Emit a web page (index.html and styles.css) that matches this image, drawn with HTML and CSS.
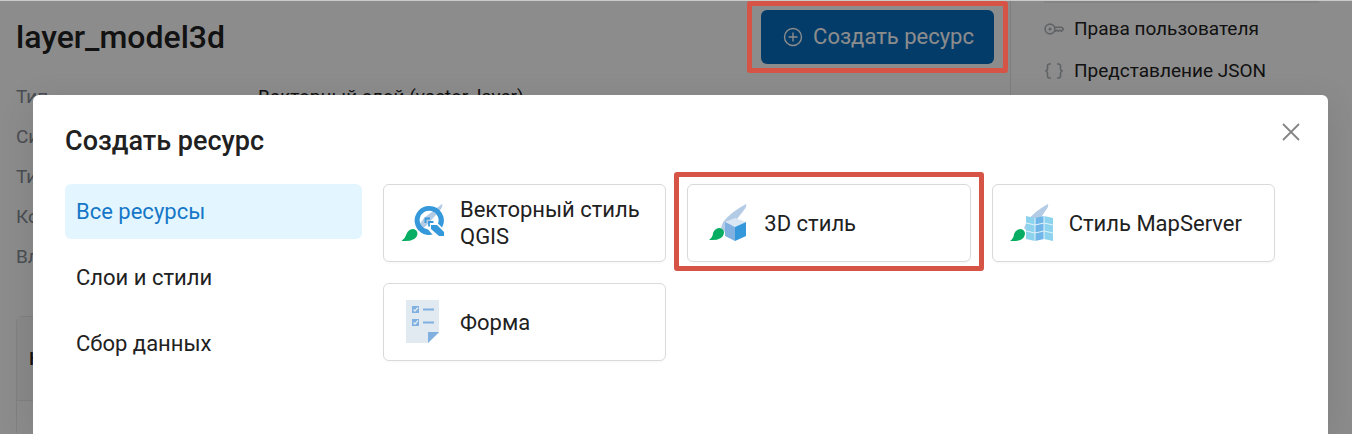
FILE: index.html
```html
<!DOCTYPE html>
<html lang="ru">
<head>
<meta charset="utf-8">
<title>layer_model3d</title>
<link rel="stylesheet" href="styles.css">
</head>
<body>
<div class="page">
  <main class="content">
    <header class="content-header">
      <h1 class="page-title">layer_model3d</h1>
      <div class="marked">
        <button class="create-button" type="button">
          <svg class="create-icon" viewBox="0 0 20 20" aria-hidden="true"><circle cx="10" cy="10" r="8.5"/><path d="M10 5.500v9M5.500 10h9"/></svg>
          Создать ресурс
        </button>
        <span class="marker marker-button"></span>
      </div>
    </header>
    <dl class="details">
      <dt>Тип</dt><dd>Векторный слой (vector_layer)</dd>
      <dt>Сис</dt><dd></dd>
      <dt>Тип</dt><dd></dd>
      <dt>Кол</dt><dd></dd>
      <dt>Вла</dt><dd></dd>
    </dl>
    <table class="fields">
      <thead><tr><th scope="col">На</th></tr></thead>
      <tbody><tr><td></td></tr></tbody>
    </table>
  </main>
  <aside class="side">
    <ul class="side-list">
      <li><a class="side-link" href="#">
        <svg class="side-icon" viewBox="0 0 20 20" aria-hidden="true"><circle cx="6" cy="10" r="4.9"/><circle cx="6" cy="10" r="0.8"/><path d="M10.600 8.200h7l1.800 1.800-1.800 2.200-1.800-1-1.500 1-1.500-1-1.200 1h-1.300"/></svg>
        Права пользователя</a></li>
      <li><a class="side-link" href="#">
        <svg class="side-icon" viewBox="0 0 20 20" aria-hidden="true"><path d="M7 3H5.500Q3.500 3 3.500 5v2.800Q3.500 10 1.200 10 3.500 10 3.500 12.200V15q0 2 2 2H7M13 3h1.500q2 0 2 2v2.800q0 2.200 2.300 2.200-2.300 0-2.300 2.200V15q0 2-2 2H13"/></svg>
        Представление JSON</a></li>
    </ul>
  </aside>
</div>
<div class="backdrop"></div>
<section class="modal" role="dialog" aria-labelledby="modal-title">
  <header class="modal-header">
    <h2 class="modal-title" id="modal-title">Создать ресурс</h2>
    <button class="close-button" type="button" aria-label="Закрыть">
      <svg class="close-icon" viewBox="0 0 18 18" aria-hidden="true"><path d="M1 1l16 16M17 1L1 17"/></svg>
    </button>
  </header>
  <div class="modal-body">
    <nav class="categories">
      <button class="category category-active" type="button">Все ресурсы</button>
      <button class="category" type="button">Слои и стили</button>
      <button class="category" type="button">Сбор данных</button>
    </nav>
    <div class="cards">
      <button class="card" type="button">
        <svg class="card-icon" viewBox="0 0 48 48" aria-hidden="true">
          <path fill="#b3cbe4" d="M44 5q1.500 2-2.500 7L28 27l-7 5-2-3 7-10z"/>
          <path fill="#06ad62" d="M3.500 42q4-3 5-7 2-5 7-5 4 1 4 5-1 8-16 7z"/>
          <path fill="#3498db" fill-rule="evenodd" d="M31 7a14.500 14.500 0 1 0 3.500 28.600l-4.500-5A9.500 9.500 0 1 1 40 24.500l4 4A14.500 14.500 0 0 0 31 7z"/>
          <path fill="#3498db" d="M33 26h6l7 7v4h-5l-8-7z"/>
          <path fill="none" stroke="#3498db" stroke-width="1.800" d="M27.500 24v-4.500H32M31 27.500V23h4.500"/>
        </svg>
        <span>Векторный стиль QGIS</span>
      </button>
      <div class="marked">
        <button class="card" type="button">
          <svg class="card-icon" viewBox="0 0 48 48" aria-hidden="true">
            <path fill="#b3cbe4" d="M44 5q1 2-2 6L28 29l-6 4-3-4 2-6Q29 13 44 5z"/>
            <path fill="#06ad62" d="M7 41q4-3 4-7 2-5 7-5 4 1 4 5-1 8-15 7z"/>
            <path fill="#d9e7f4" d="M23 23l10-4 11 4-11 5z"/>
            <path fill="#80b0e0" d="M23 23l10 5v14l-10-5z"/>
            <path fill="#3498db" d="M44 23l-11 5v14l11-5z"/>
          </svg>
          <span>3D стиль</span>
        </button>
        <span class="marker marker-card"></span>
      </div>
      <button class="card" type="button">
        <svg class="card-icon" viewBox="0 0 48 48" aria-hidden="true">
          <path fill="#b3cbe4" d="M41 5q1 2-2 6L29 26l-8 7-4-4 3-7Q28 12 41 5z"/>
          <path fill="#06ad62" d="M3 42q4-3 4-7 2-5 7-5 4 1 4 5-1 8-15 7z"/>
          <path fill="#8dd3ed" d="M19 17l9 2v23l-9-2zM37 17l9 2v23l-9-2z"/>
          <path fill="#70b6e9" d="M28 19l9-2v23l-9 2z"/>
          <path fill="none" stroke="#e1f3fb" stroke-width="1" d="M19 24l9 2 9-2 9 2M19 32l9 2 9-2 9 2M28 19v23M37 17v23"/>
        </svg>
        <span>Стиль MapServer</span>
      </button>
      <button class="card" type="button">
        <svg class="card-icon" viewBox="0 0 48 48" aria-hidden="true">
          <path fill="#e1eaf0" d="M8 2h33v33L30 45H8z"/>
          <path fill="#80b0e0" d="M30 34h11L30 45zM14 8h7v7h-7zM14 21h7v7h-7zM25 10.500h11v2H25zM25 23.500h11v2H25z"/>
          <path fill="none" stroke="#e1eaf0" stroke-width="1.300" d="M15.500 11.500l1.500 1.500 3-3.500M15.500 24.500l1.500 1.500 3-3.500"/>
        </svg>
        <span>Форма</span>
      </button>
    </div>
  </div>
</section>
</body>
</html>
```
FILE: styles.css
```css
* { box-sizing: border-box; }

body {
  margin: 0;
  min-height: 100vh;
  position: relative;
  background: #fff;
  color: #212121;
  font: 19px/28px Roboto, "Open Sans", sans-serif;
}

button {
  margin: 0;
  font: inherit;
  color: inherit;
  cursor: pointer;
}

svg { flex: none; fill: none; }

.page {
  display: grid;
  grid-template-columns: minmax(0, 1011fr) minmax(0, 341fr);
  min-height: 100vh;
}

.content {
  padding: 10px 16px 0;
  border-right: 1px solid #e6e6e6;
}

.content-header {
  display: flex;
  justify-content: space-between;
  align-items: center;
}

.page-title {
  margin: 0;
  font-size: 32px;
  font-weight: 500;
  line-height: 40px;
}

.marked {
  position: relative;
  display: grid;
}

.marker {
  position: absolute;
  z-index: 2;
  border: 5px solid #d65446;
  border-radius: 3px;
  pointer-events: none;
}

.marker-button { inset: -9px -14px; }
.marker-card { inset: -12px -13px -9px; }

.create-button {
  display: flex;
  align-items: center;
  gap: 10px;
  height: 54px;
  padding: 0 20px 0 22px;
  border: 0;
  border-radius: 6px;
  background: #066dbf;
  color: #fff;
  font-size: 22px;
}

.create-icon {
  width: 20px;
  height: 20px;
  stroke: currentColor;
  stroke-width: 1.4;
}

.details {
  display: grid;
  grid-template-columns: 242px 1fr;
  grid-auto-rows: 40px;
  align-items: center;
  margin: 13px 0 39px;
}

.details dt { color: #868e96; }
.details dd { margin: 0; }

.fields {
  width: 100%;
  border: 1px solid #ececec;
  border-bottom: 0;
  border-radius: 6px 6px 0 0;
  border-spacing: 0;
}

.fields th {
  height: 84px;
  padding: 0 12px;
  border-bottom: 1px solid #ececec;
  background: #fafafa;
  font-weight: 500;
  text-align: left;
}

.fields td { height: 32px; }

.side { padding: 0 33px; }

.side-list {
  margin: 0;
  padding: 5px 0 0;
  border-top: 3px solid #f0f0f0;
  list-style: none;
}

.side-link {
  display: flex;
  align-items: center;
  gap: 10px;
  height: 42px;
  color: #212121;
  text-decoration: none;
}

.side-icon {
  width: 20px;
  height: 20px;
  stroke: #b0b5ba;
  stroke-width: 1.6;
}

.backdrop {
  position: absolute;
  inset: 0;
  z-index: 1;
  border-top: 1px solid #c9cbc9;
  background: rgba(0, 0, 0, 0.45);
}

.modal {
  position: absolute;
  inset: 95px 24px 0 33px;
  z-index: 3;
  padding: 26px 27px 0 32px;
  border-radius: 6px 6px 0 0;
  background: #fff;
  box-shadow: 0 9px 36px rgba(0, 0, 0, 0.1);
}

.modal-header {
  display: flex;
  justify-content: space-between;
  align-items: flex-start;
}

.modal-title {
  margin: 0;
  font-size: 27px;
  font-weight: 500;
  line-height: 40px;
}

.close-button {
  display: flex;
  padding: 2px 1px;
  border: 0;
  background: none;
}

.close-icon {
  width: 18px;
  height: 18px;
  stroke: #858585;
  stroke-width: 1.8;
}

.modal-body {
  display: grid;
  grid-template-columns: 297px 1fr;
  gap: 21px;
  padding: 23px 26px 0 0;
  font-size: 22px;
}

.categories {
  display: flex;
  flex-direction: column;
  gap: 11px;
}

.category {
  height: 55px;
  padding: 0 11px;
  border: 0;
  border-radius: 6px;
  background: none;
  text-align: left;
}

.category-active {
  background: #e3f6ff;
  color: #1677c8;
}

.cards {
  display: grid;
  grid-template-columns: repeat(3, minmax(0, 1fr));
  align-content: start;
  gap: 21px;
}

.card {
  display: flex;
  align-items: center;
  gap: 14px;
  height: 78px;
  padding: 0 14px;
  border: 1px solid #d9d9d9;
  border-radius: 6px;
  background: #fff;
  box-shadow: 0 2px 1px rgba(0, 0, 0, 0.02);
  line-height: 27px;
  text-align: left;
}

.card-icon {
  width: 48px;
  height: 48px;
}
```
